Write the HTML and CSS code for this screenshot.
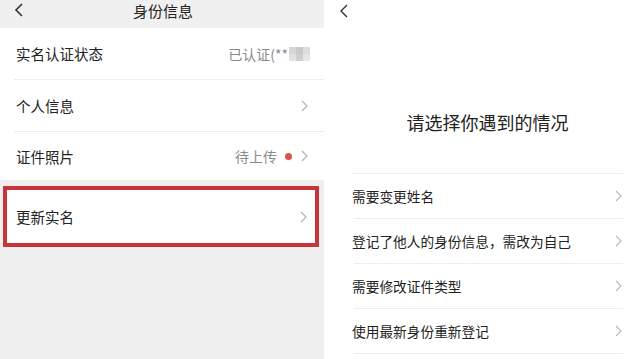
FILE: index.html
```html
<!DOCTYPE html>
<html lang="zh">
<head>
<meta charset="utf-8">
<link rel="stylesheet" href="styles.css">
</head>
<body>
<div class="screen">
  <section class="left">
    <header class="lhead">
      <svg class="back" width="10" height="14" viewBox="0 0 10 14"><path d="M8 1 L2 7 L8 13" fill="none" stroke="#333" stroke-width="1.6"/></svg>
      <div class="ltitle">身份信息</div>
    </header>
    <div class="group">
      <div class="row bordered">
        <span class="label">实名认证状态</span>
        <span class="value">已认证(**<span class="mosaic"><i></i><i></i><i></i><i></i><i></i><i></i></span></span>
      </div>
      <div class="row bordered">
        <span class="label">个人信息</span>
        <svg class="chev" width="7" height="12" viewBox="0 0 7 12"><path d="M1 1 L6 6 L1 11" fill="none" stroke="#b3b3b3" stroke-width="1.2"/></svg>
      </div>
      <div class="row short">
        <span class="label">证件照片</span>
        <span class="value">待上传</span>
        <span class="dot"></span>
        <svg class="chev" width="7" height="12" viewBox="0 0 7 12"><path d="M1 1 L6 6 L1 11" fill="none" stroke="#b3b3b3" stroke-width="1.2"/></svg>
      </div>
    </div>
    <div class="row highlight">
      <span class="label">更新实名</span>
      <svg class="chev" width="7" height="12" viewBox="0 0 7 12"><path d="M1 1 L6 6 L1 11" fill="none" stroke="#b3b3b3" stroke-width="1.2"/></svg>
    </div>
  </section>
  <section class="right">
    <header class="rhead">
      <svg class="back" width="10" height="14" viewBox="0 0 10 14"><path d="M8 1 L2 7 L8 13" fill="none" stroke="#333" stroke-width="1.4"/></svg>
    </header>
    <h1 class="rtitle">请选择你遇到的情况</h1>
    <ul class="options">
      <li class="opt"><span>需要变更姓名</span><svg class="chev" width="7" height="12" viewBox="0 0 7 12"><path d="M1 1 L6 6 L1 11" fill="none" stroke="#b8b8b8" stroke-width="1.1"/></svg></li>
      <li class="opt"><span>登记了他人的身份信息，需改为自己</span><svg class="chev" width="7" height="12" viewBox="0 0 7 12"><path d="M1 1 L6 6 L1 11" fill="none" stroke="#b8b8b8" stroke-width="1.1"/></svg></li>
      <li class="opt"><span>需要修改证件类型</span><svg class="chev" width="7" height="12" viewBox="0 0 7 12"><path d="M1 1 L6 6 L1 11" fill="none" stroke="#b8b8b8" stroke-width="1.1"/></svg></li>
      <li class="opt"><span>使用最新身份重新登记</span><svg class="chev" width="7" height="12" viewBox="0 0 7 12"><path d="M1 1 L6 6 L1 11" fill="none" stroke="#b8b8b8" stroke-width="1.1"/></svg></li>
    </ul>
  </section>
</div>
</body>
</html>
```
FILE: styles.css
```css
* { box-sizing: border-box; }
html, body { margin: 0; padding: 0; }
body {
  width: 640px;
  height: 359px;
  overflow: hidden;
  background: #fff;
  font-family: "Noto Sans CJK SC", "Noto Sans", sans-serif;
  color: #222;
}
.screen {
  display: flex;
  width: 640px;
  height: 359px;
}
.left {
  width: 324px;
  flex: none;
  background: #efefef;
}
.lhead {
  height: 28px;
  position: relative;
  background: #f0f0f0;
}
.lhead .back {
  position: absolute;
  left: 14px;
  top: 3px;
}
.ltitle {
  text-align: center;
  font-size: 15px;
  line-height: 22px;
  color: #222;
  padding-left: 2px;
}
.group {
  background: #fff;
  padding-left: 14px;
}
.row {
  display: flex;
  align-items: center;
  height: 51px;
  font-size: 14.5px;
  padding-right: 16px;
}
.row.bordered {
  height: 52px;
  border-bottom: 1px solid #ececec;
}
.row.short { height: 48px; }
.label {
  flex: 1;
  padding-left: 2px;
}
.value {
  color: #8a8a8a;
  font-size: 14px;
  display: flex;
  align-items: center;
}
.row.bordered .value { margin-right: -2px; }
.mosaic {
  display: grid;
  grid-template-columns: repeat(3, 7px);
  grid-template-rows: repeat(2, 7px);
  margin-left: 1px;
}
.mosaic i:nth-child(1) { background: #d6d6d6; }
.mosaic i:nth-child(2) { background: #c9c9c9; }
.mosaic i:nth-child(3) { background: #dcdcdc; }
.mosaic i:nth-child(4) { background: #e2e2e2; }
.mosaic i:nth-child(5) { background: #d0d0d0; }
.mosaic i:nth-child(6) { background: #e6e6e6; }
.dot {
  width: 7px;
  height: 7px;
  border-radius: 50%;
  background: #d9534f;
  margin-left: 8px;
  margin-right: 9px;
}
.chev { flex: none; display: block; }
.highlight {
  margin: 6px 5px 0 3px;
  height: 61px;
  background: #fff;
  border: 4px solid #c8343a;
  padding-left: 7px;
  padding-right: 8px;
}
.right {
  flex: 1;
  background: #fff;
  padding-left: 28px;
  padding-right: 17px;
}
.rhead {
  height: 28px;
  position: relative;
}
.rhead .back {
  position: absolute;
  left: -13px;
  top: 4px;
}
.rtitle {
  margin: 0;
  height: 146px;
  padding-top: 81px;
  font-size: 18px;
  font-weight: normal;
  line-height: 26px;
  text-align: center;
  color: #222;
}
.options {
  list-style: none;
  margin: 0;
  padding: 0 0 0 2px;
  border-top: 1px solid #ededed;
  margin-top: -1px;
}
.opt {
  display: flex;
  align-items: center;
  justify-content: space-between;
  height: 45px;
  border-bottom: 1px solid #ededed;
  font-size: 13.7px;
  color: #222;
  margin-left: 0;
}
.opt span { margin-left: -2px; }
.opt .chev { margin-right: 1px; }
```
